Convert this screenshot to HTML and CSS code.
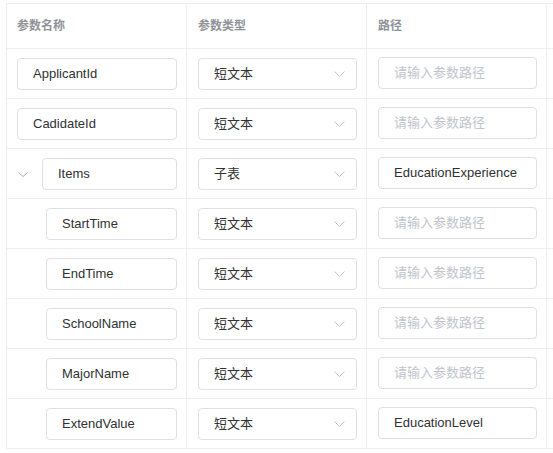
FILE: index.html
```html
<!DOCTYPE html>
<html lang="zh-CN">
<head>
<meta charset="utf-8">
<title>参数</title>
<link rel="stylesheet" href="styles.css">
</head>
<body>
<div class="viewport">
  <div class="table">
    <div class="row head">
      <div class="cell"><span class="th">参数名称</span></div>
      <div class="cell"><span class="th">参数类型</span></div>
      <div class="cell"><span class="th">路径</span></div>
      <div class="cell"></div>
    </div>

    <div class="row">
      <div class="cell"><div class="input">ApplicantId</div></div>
      <div class="cell"><div class="select"><span>短文本</span><svg class="arrow" viewBox="0 0 11 6"><path d="M0.5 0.5 L5.5 5.5 L10.5 0.5"/></svg></div></div>
      <div class="cell"><div class="input path placeholder">请输入参数路径</div></div>
      <div class="cell"></div>
    </div>

    <div class="row">
      <div class="cell"><div class="input">CadidateId</div></div>
      <div class="cell"><div class="select"><span>短文本</span><svg class="arrow" viewBox="0 0 11 6"><path d="M0.5 0.5 L5.5 5.5 L10.5 0.5"/></svg></div></div>
      <div class="cell"><div class="input path placeholder">请输入参数路径</div></div>
      <div class="cell"></div>
    </div>

    <div class="row">
      <div class="cell tree"><svg class="expand" viewBox="0 0 10 5"><path d="M0.5 0.5 L5 4.5 L9.5 0.5"/></svg><div class="input parent">Items</div></div>
      <div class="cell"><div class="select"><span>子表</span><svg class="arrow" viewBox="0 0 11 6"><path d="M0.5 0.5 L5.5 5.5 L10.5 0.5"/></svg></div></div>
      <div class="cell"><div class="input path">EducationExperience</div></div>
      <div class="cell"></div>
    </div>

    <div class="row">
      <div class="cell child"><div class="input">StartTime</div></div>
      <div class="cell"><div class="select"><span>短文本</span><svg class="arrow" viewBox="0 0 11 6"><path d="M0.5 0.5 L5.5 5.5 L10.5 0.5"/></svg></div></div>
      <div class="cell"><div class="input path placeholder">请输入参数路径</div></div>
      <div class="cell"></div>
    </div>

    <div class="row">
      <div class="cell child"><div class="input">EndTime</div></div>
      <div class="cell"><div class="select"><span>短文本</span><svg class="arrow" viewBox="0 0 11 6"><path d="M0.5 0.5 L5.5 5.5 L10.5 0.5"/></svg></div></div>
      <div class="cell"><div class="input path placeholder">请输入参数路径</div></div>
      <div class="cell"></div>
    </div>

    <div class="row">
      <div class="cell child"><div class="input">SchoolName</div></div>
      <div class="cell"><div class="select"><span>短文本</span><svg class="arrow" viewBox="0 0 11 6"><path d="M0.5 0.5 L5.5 5.5 L10.5 0.5"/></svg></div></div>
      <div class="cell"><div class="input path placeholder">请输入参数路径</div></div>
      <div class="cell"></div>
    </div>

    <div class="row">
      <div class="cell child"><div class="input">MajorName</div></div>
      <div class="cell"><div class="select"><span>短文本</span><svg class="arrow" viewBox="0 0 11 6"><path d="M0.5 0.5 L5.5 5.5 L10.5 0.5"/></svg></div></div>
      <div class="cell"><div class="input path placeholder">请输入参数路径</div></div>
      <div class="cell"></div>
    </div>

    <div class="row">
      <div class="cell child"><div class="input">ExtendValue</div></div>
      <div class="cell"><div class="select"><span>短文本</span><svg class="arrow" viewBox="0 0 11 6"><path d="M0.5 0.5 L5.5 5.5 L10.5 0.5"/></svg></div></div>
      <div class="cell"><div class="input path">EducationLevel</div></div>
      <div class="cell"></div>
    </div>
  </div>
</div>
</body>
</html>
```

FILE: styles.css
```css
html, body {
  margin: 0;
  padding: 0;
  background: #ffffff;
}

body {
  font-family: "Liberation Sans", Arial, "Noto Sans CJK SC", sans-serif;
  color: #303133;
}

.viewport {
  width: 553px;
  height: 453px;
  overflow: hidden;
  padding: 3px 0 0 6px;
  box-sizing: border-box;
}

.table {
  width: 721px;
  border-left: 1px solid #ebeef5;
  border-top: 1px solid #ebeef5;
}

.row {
  display: grid;
  grid-template-columns: 180px 180px 180px 180px;
  height: 50px;
}

.row.head {
  height: 45px;
}

.cell {
  box-sizing: border-box;
  border-right: 1px solid #ebeef5;
  border-bottom: 1px solid #ebeef5;
  padding: 0 9px 0 10px;
  display: flex;
  align-items: center;
}

.row .cell:nth-child(2),
.row .cell:nth-child(3) {
  padding-left: 11px;
  padding-right: 9px;
}

.th {
  font-size: 12px;
  font-weight: bold;
  color: #909399;
  line-height: 16px;
}

.input,
.select {
  box-sizing: border-box;
  height: 32px;
  width: 160px;
  border: 1px solid #dcdfe6;
  border-radius: 4px;
  padding: 0 15px;
  font-size: 13px;
  line-height: 30px;
  color: #303133;
  white-space: nowrap;
  overflow: hidden;
}

.select {
  width: 159px;
  display: flex;
  align-items: center;
  justify-content: space-between;
  padding-right: 11px;
}

.input.path {
  width: 159px;
  margin-top: -2px;
}

.placeholder {
  color: #c0c4cc;
}

.arrow {
  width: 11px;
  height: 6px;
  fill: none;
  stroke: #c0c4cc;
  stroke-width: 1;
}

.tree {
  padding-left: 11px;
}

.expand {
  width: 10px;
  height: 5px;
  fill: none;
  stroke: #a8abb2;
  stroke-width: 1;
  margin-right: 14px;
  margin-top: 1px;
}

.input.parent {
  width: 135px;
}

.child {
  padding-left: 39px;
}

.child .input {
  width: 131px;
}
```
